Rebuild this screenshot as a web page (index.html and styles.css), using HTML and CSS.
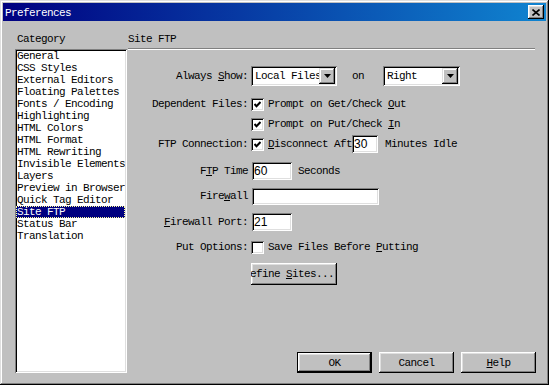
FILE: index.html
```html
<!DOCTYPE html>
<html lang="en">
<head>
  <meta charset="UTF-8" />
  <title>Preferences</title>
  <link rel="stylesheet" href="styles.css">
</head>
<body>
  <div class="window">
    <div class="titlebar">
      <span class="title">Preferences</span>
      <span class="close-btn">
        <svg width="8" height="7" viewBox="0 0 8 7"><path d="M0.5 0.5 L7.5 6.5 M7.5 0.5 L0.5 6.5" stroke="#000" stroke-width="1.6" fill="none"/></svg>
      </span>
    </div>

    <div class="content">
      <div class="category">
        <div class="group-label">Category</div>
        <ul class="listbox">
          <li>General</li>
          <li>CSS Styles</li>
          <li>External Editors</li>
          <li>Floating Palettes</li>
          <li>Fonts / Encoding</li>
          <li>Highlighting</li>
          <li>HTML Colors</li>
          <li>HTML Format</li>
          <li>HTML Rewriting</li>
          <li>Invisible Elements</li>
          <li>Layers</li>
          <li>Preview in Browser</li>
          <li>Quick Tag Editor</li>
          <li class="selected">Site FTP</li>
          <li>Status Bar</li>
          <li>Translation</li>
        </ul>
      </div>

      <div class="panel">
        <div class="panel-title">Site FTP</div>

        <div class="form">
          <div class="row r-show">
            <span class="label">Always <u>S</u>how:</span>
            <div class="ctrl">
              <div class="select select-local">
                <span class="select-text">Local Files</span>
                <span class="select-arrow"><svg width="7" height="4" viewBox="0 0 7 4"><polygon points="0,0 7,0 3.5,4" fill="#000"/></svg></span>
              </div>
              <span class="on">on</span>
              <div class="select select-side">
                <span class="select-text">Right</span>
                <span class="select-arrow"><svg width="7" height="4" viewBox="0 0 7 4"><polygon points="0,0 7,0 3.5,4" fill="#000"/></svg></span>
              </div>
            </div>
          </div>

          <div class="row r-dep1">
            <span class="label">Dependent Files:</span>
            <div class="ctrl">
              <span class="check"><svg width="7" height="7" viewBox="0 0 7 7"><path d="M0.5 3 L2.5 5.3 L6.5 1" stroke="#000" stroke-width="2" fill="none"/></svg></span>
              <span class="check-text">Prompt on Get/Check <u>O</u>ut</span>
            </div>
          </div>

          <div class="row r-dep2">
            <span class="label"></span>
            <div class="ctrl">
              <span class="check"><svg width="7" height="7" viewBox="0 0 7 7"><path d="M0.5 3 L2.5 5.3 L6.5 1" stroke="#000" stroke-width="2" fill="none"/></svg></span>
              <span class="check-text">Prompt on Put/Check <u>I</u>n</span>
            </div>
          </div>

          <div class="row r-conn">
            <span class="label">FTP Connection:</span>
            <div class="ctrl">
              <span class="check"><svg width="7" height="7" viewBox="0 0 7 7"><path d="M0.5 3 L2.5 5.3 L6.5 1" stroke="#000" stroke-width="2" fill="none"/></svg></span>
              <span class="check-text"><u>D</u>isconnect Aft</span>
              <span class="field field-mins">30</span>
              <span class="after">Minutes Idle</span>
            </div>
          </div>

          <div class="row r-time">
            <span class="label">F<u>T</u>P Time</span>
            <div class="ctrl">
              <span class="field field-short">60</span>
              <span class="after">Seconds</span>
            </div>
          </div>

          <div class="row r-fw">
            <span class="label">Fire<u>w</u>all</span>
            <div class="ctrl">
              <span class="field field-long"></span>
            </div>
          </div>

          <div class="row r-port">
            <span class="label"><u>F</u>irewall Port:</span>
            <div class="ctrl">
              <span class="field field-short">21</span>
            </div>
          </div>

          <div class="row r-put">
            <span class="label">Put Options:</span>
            <div class="ctrl">
              <span class="check"></span>
              <span class="check-text">Save Files Before <u>P</u>utting</span>
            </div>
          </div>

          <div class="row r-sites">
            <span class="label"></span>
            <div class="ctrl">
              <span class="button button-sites"><span>Define <u>S</u>ites...</span></span>
            </div>
          </div>
        </div>

        <div class="dialog-buttons">
          <span class="button button-default">OK</span>
          <span class="button">Cancel</span>
          <span class="button"><u>H</u>elp</span>
        </div>
      </div>
    </div>
  </div>
</body>
</html>
```

FILE: styles.css
```css
:root {
  --face: #c0c0c0;
  --light: #dfdfdf;
  --shadow: #808080;
  --dark: #000000;
  --navy: #000080;
}
* { box-sizing: border-box; margin: 0; padding: 0; }
body {
  background: var(--face);
  font-family: 'Liberation Mono', 'DejaVu Sans Mono', monospace;
  font-size: 11px;
  letter-spacing: -0.6px;
  color: #000;
}
u { text-decoration: underline; text-underline-offset: 1px; }

.window {
  width: 549px;
  height: 385px;
  padding: 3px;
  background: var(--face);
  box-shadow: inset -1px -1px var(--dark), inset 1px 1px var(--light),
              inset -2px -2px var(--shadow), inset 2px 2px #fff;
  display: flex;
  flex-direction: column;
}

/* title bar */
.titlebar {
  height: 18px;
  background: linear-gradient(to right, var(--navy), #1084d0);
  display: flex;
  align-items: center;
  justify-content: space-between;
  padding: 0 2px;
}
.title { color: #fff; line-height: 12px; padding-top: 1px; }
.close-btn {
  width: 16px;
  height: 14px;
  background: var(--face);
  display: flex;
  align-items: center;
  justify-content: center;
  box-shadow: inset -1px -1px var(--dark), inset 1px 1px #fff,
              inset -2px -2px var(--shadow), inset 2px 2px var(--light);
}

/* body */
.content {
  flex: 1;
  display: flex;
  padding: 12px 11px 9px 12px;
}
.category { width: 113px; display: flex; flex-direction: column; }
.group-label { line-height: 12px; padding-left: 2px; margin-bottom: 4px; }
.listbox {
  list-style: none;
  flex: 1;
  width: 112px;
  background: #fff;
  padding: 1px 2px 0 1px;
  box-shadow: inset 1px 1px var(--shadow), inset -1px -1px #fff,
              inset 2px 2px var(--dark), inset -2px -2px var(--light);
}
.listbox li { line-height: 12px; height: 12px; padding-left: 1px; white-space: nowrap; overflow: hidden; }
.listbox li.selected {
  background: var(--navy);
  color: #fff;
  outline: 1px dotted #ffff9a;
  outline-offset: -1px;
}

.panel { flex: 1; display: flex; flex-direction: column; }
.panel-title {
  height: 16px;
  line-height: 12px;
  border-bottom: 1px solid var(--shadow);
  box-shadow: 0 1px 0 #fff;
}

.form { padding-top: 17px; }
.row {
  display: grid;
  grid-template-columns: 120px 1fr;
  column-gap: 3px;
  align-items: center;
  height: 20px;
}
.label { text-align: right; white-space: nowrap; }
.ctrl { display: flex; align-items: center; white-space: nowrap; }

.r-dep1 { margin-top: 8px; }
.r-time { margin-top: 7px; }
.r-fw { margin-top: 5px; }
.r-port { margin-top: 6px; }
.r-put { margin-top: 5px; }
.r-sites { margin-top: 6px; height: 22px; }

/* controls */
.select {
  height: 20px;
  background: #fff;
  display: flex;
  align-items: center;
  padding: 2px;
  box-shadow: inset 1px 1px var(--shadow), inset -1px -1px #fff,
              inset 2px 2px var(--dark), inset -2px -2px var(--light);
}
.select-local { width: 86px; }
.select-side { width: 77px; margin-left: 19px; }
.select-text { flex: 1; overflow: hidden; padding-left: 2px; }
.select-arrow {
  width: 16px;
  height: 16px;
  background: var(--face);
  display: flex;
  align-items: center;
  justify-content: center;
  box-shadow: inset -1px -1px var(--dark), inset 1px 1px var(--light),
              inset -2px -2px var(--shadow), inset 2px 2px #fff;
}
.on { margin-left: 15px; }

.check {
  width: 13px;
  height: 13px;
  background: #fff;
  display: flex;
  align-items: center;
  justify-content: center;
  box-shadow: inset 1px 1px var(--shadow), inset -1px -1px #fff,
              inset 2px 2px var(--dark), inset -2px -2px var(--light);
}
.check-text { margin-left: 4px; }

.field {
  height: 18px;
  background: #fff;
  padding: 2px 1px 0 2px;
  font-family: 'Liberation Sans', Arial, sans-serif;
  font-size: 12px;
  letter-spacing: 0;
  line-height: 14px;
  box-shadow: inset 1px 1px var(--shadow), inset -1px -1px #fff,
              inset 2px 2px var(--dark), inset -2px -2px var(--light);
}
.field-mins { width: 26px; }
.field-short { width: 40px; margin-left: 1px; }
.field-long { width: 127px; height: 17px; margin-left: 1px; }
.after { margin-left: 7px; }
.r-time .after { margin-left: 6px; }

.button {
  height: 21px;
  width: 75px;
  background: var(--face);
  display: flex;
  align-items: center;
  justify-content: center;
  white-space: nowrap;
  box-shadow: inset -1px -1px var(--dark), inset 1px 1px #fff,
              inset -2px -2px var(--shadow), inset 2px 2px var(--light);
}
.button-default { border: 1px solid var(--dark); }
.button-sites {
  width: 86px;
  height: 22px;
  overflow: hidden;
  justify-content: flex-end;
  padding-right: 3px;
}

.dialog-buttons {
  margin-top: auto;
  margin-right: -1px;
  display: flex;
  justify-content: flex-end;
  gap: 7px;
}
```
